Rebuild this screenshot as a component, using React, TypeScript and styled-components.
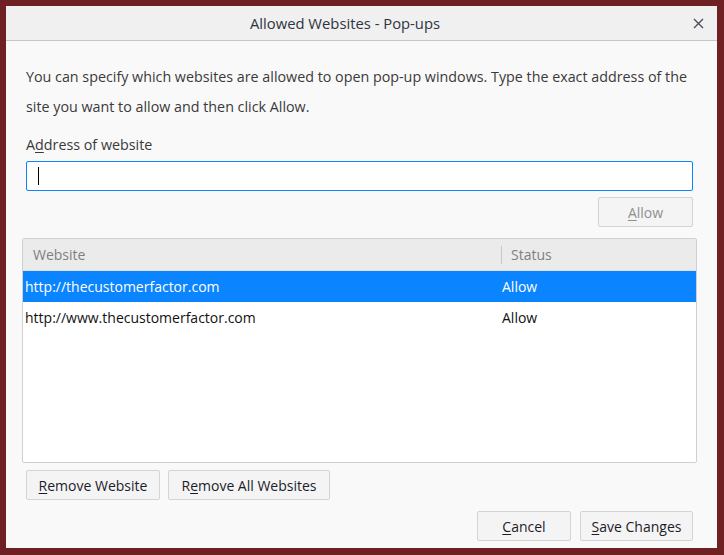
import React from "react";
import styled, { createGlobalStyle } from "styled-components";

const GlobalStyle = createGlobalStyle`
  html, body {
    margin: 0;
    padding: 0;
    background: #6f2022;
  }
  * {
    box-sizing: border-box;
  }
`;

const Frame = styled.div`
  width: 724px;
  height: 555px;
  padding: 6px 7px 7px 6px;
  background: #6f2022;
  font-family: "Open Sans", "Noto Sans", sans-serif;
`;

const Window = styled.div`
  height: 100%;
  display: flex;
  flex-direction: column;
  background: #f9f9f9;
`;

const TitleBar = styled.div`
  position: relative;
  height: 35px;
  flex: none;
  display: flex;
  align-items: center;
  justify-content: center;
  padding-right: 33px;
  background: #f0f0f0;
  border-bottom: 1px solid #c6c6c6;
  color: #2f3440;
  font-size: 14.8px;
`;

const CloseButton = styled.button`
  position: absolute;
  right: 10px;
  top: 8px;
  width: 18px;
  height: 18px;
  padding: 0;
  border: none;
  background: none;
  display: grid;
  place-items: center;
`;

const Body = styled.div`
  flex: 1;
  display: flex;
  flex-direction: column;
  padding: 21px 24px 7px 20px;
  color: #3a3a3a;
  font-size: 14px;
`;

const Intro = styled.p`
  margin: 0;
  line-height: 30px;
  font-size: 14.3px;
`;

const Label = styled.label`
  margin-top: 13px;
  line-height: 20px;
  font-size: 14.3px;
`;

const AccessKey = styled.span`
  text-decoration: underline;
  text-underline-offset: 2px;
`;

const AddressInput = styled.div`
  margin-top: 6px;
  height: 30px;
  border: 1px solid #0a84ff;
  border-radius: 2px;
  background: #fff;
  display: flex;
  align-items: center;
  padding-left: 11px;
`;

const Caret = styled.span`
  width: 1px;
  height: 18px;
  background: #000;
`;

const Row = styled.div<{ $top: number; $end?: boolean }>`
  display: flex;
  gap: ${(p) => (p.$end ? 9 : 8)}px;
  margin-top: ${(p) => p.$top}px;
  justify-content: ${(p) => (p.$end ? "flex-end" : "flex-start")};
`;

const Button = styled.button<{ $width: number }>`
  width: ${(p) => p.$width}px;
  height: 30px;
  border: 1px solid #d4d4d4;
  border-radius: 2px;
  background: #f4f4f4;
  color: ${(p) => (p.disabled ? "#8f8f8f" : "#1c1c2a")};
  font-family: inherit;
  font-size: 14px;
  padding: 0;
`;

const Table = styled.div`
  margin: 11px -4px 0 -4px;
  height: 225px;
  border: 1px solid #d0d0d0;
  border-radius: 2px;
  background: #fff;
  display: flex;
  flex-direction: column;
`;

const HeaderRow = styled.div`
  height: 32px;
  display: flex;
  align-items: center;
  background: #ebebeb;
  border-bottom: 1px solid #e0e0e0;
  color: #808080;
`;

const HeaderCell = styled.div<{ $width?: number; $divider?: boolean }>`
  width: ${(p) => (p.$width ? `${p.$width}px` : "auto")};
  flex: ${(p) => (p.$width ? "none" : "1")};
  height: 18px;
  display: flex;
  align-items: center;
  padding-left: ${(p) => (p.$divider ? 9 : 10)}px;
  border-left: ${(p) => (p.$divider ? "1px solid #c8c8c8" : "none")};
`;

const DataRow = styled.div<{ $selected?: boolean }>`
  height: 31px;
  display: flex;
  align-items: center;
  background: ${(p) => (p.$selected ? "#0a84ff" : "transparent")};
  color: ${(p) => (p.$selected ? "#fff" : "#111")};
`;

const Cell = styled.div<{ $width?: number }>`
  width: ${(p) => (p.$width ? `${p.$width}px` : "auto")};
  flex: ${(p) => (p.$width ? "none" : "1")};
  padding-left: ${(p) => (p.$width ? 2 : 1)}px;
`;

const sites = [
  { url: "http://thecustomerfactor.com", status: "Allow", selected: true },
  { url: "http://www.thecustomerfactor.com", status: "Allow", selected: false },
];

export default function App() {
  return (
    <>
      <GlobalStyle />
      <Frame>
        <Window>
          <TitleBar>
            Allowed Websites - Pop-ups
            <CloseButton aria-label="Close">
              <svg width="11" height="11" viewBox="0 0 11 11">
                <path d="M1 1L10 10M10 1L1 10" stroke="#4a4f5a" strokeWidth="1.4" />
              </svg>
            </CloseButton>
          </TitleBar>
          <Body>
            <Intro>
              You can specify which websites are allowed to open pop-up windows. Type the exact address of the
              site you want to allow and then click Allow.
            </Intro>
            <Label>
              A<AccessKey>d</AccessKey>dress of website
            </Label>
            <AddressInput>
              <Caret />
            </AddressInput>
            <Row $top={6} $end>
              <Button $width={95} disabled>
                <AccessKey>A</AccessKey>llow
              </Button>
            </Row>
            <Table>
              <HeaderRow>
                <HeaderCell $width={478}>Website</HeaderCell>
                <HeaderCell $divider>Status</HeaderCell>
              </HeaderRow>
              {sites.map((s) => (
                <DataRow key={s.url} $selected={s.selected}>
                  <Cell $width={478}>{s.url}</Cell>
                  <Cell>{s.status}</Cell>
                </DataRow>
              ))}
            </Table>
            <Row $top={7}>
              <Button $width={134}>
                <AccessKey>R</AccessKey>emove Website
              </Button>
              <Button $width={162}>
                R<AccessKey>e</AccessKey>move All Websites
              </Button>
            </Row>
            <Row $top={11} $end>
              <Button $width={94}>
                <AccessKey>C</AccessKey>ancel
              </Button>
              <Button $width={113}>
                <AccessKey>S</AccessKey>ave Changes
              </Button>
            </Row>
          </Body>
        </Window>
      </Frame>
    </>
  );
}
